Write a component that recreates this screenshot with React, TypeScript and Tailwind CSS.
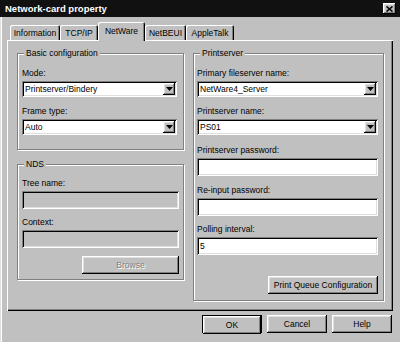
import { ReactNode } from 'react'

const raised =
  'shadow-[inset_-1px_-1px_0_#000,inset_1px_1px_0_#fff,inset_-2px_-2px_0_#808080,inset_2px_2px_0_#dfdfdf]'
const sunken =
  'shadow-[inset_1px_1px_0_#808080,inset_-1px_-1px_0_#fff,inset_2px_2px_0_#000,inset_-2px_-2px_0_#dfdfdf]'

const tabs = [
  { name: 'Information', w: 'w-[50px]' },
  { name: 'TCP/IP', w: 'w-[38px]' },
  { name: 'NetWare', w: 'w-[47px]', active: true },
  { name: 'NetBEUI', w: 'w-[41px]' },
  { name: 'AppleTalk', w: 'w-[48px]' },
]

function Label({ children }: { children: ReactNode }) {
  return <div className="leading-[10px] h-[10px] mb-[3px]">{children}</div>
}

function Select({ value }: { value: string }) {
  return (
    <div className={`h-[16px] flex items-center pl-[3px] pr-[2px] bg-white ${sunken}`}>
      <span className="flex-1 leading-[10px]">{value}</span>
      <span className={`w-[12px] h-[12px] flex items-center justify-center bg-[#c0c0c0] ${raised}`}>
        <svg width="7" height="4" viewBox="0 0 7 4">
          <path d="M0 0h7L3.5 4z" fill="#000" />
        </svg>
      </span>
    </div>
  )
}

function Input({ value, disabled }: { value?: string; disabled?: boolean }) {
  return (
    <div
      className={`h-[18px] flex items-center pl-[3px] leading-[10px] ${
        disabled ? 'bg-[#c0c0c0]' : 'bg-white'
      } ${sunken}`}
    >
      {value}
    </div>
  )
}

function Button({
  children,
  className = '',
  disabled,
}: {
  children: ReactNode
  className?: string
  disabled?: boolean
}) {
  return (
    <div
      className={`h-[18px] flex items-center justify-center bg-[#c0c0c0] leading-[10px] ${raised} ${className} ${
        disabled ? 'text-[#808080] [text-shadow:1px_1px_0_#fff]' : ''
      }`}
    >
      {children}
    </div>
  )
}

function Group({
  title,
  className,
  children,
}: {
  title: string
  className: string
  children: ReactNode
}) {
  return (
    <div
      className={`relative border border-[#808080] shadow-[inset_1px_1px_0_#fff,1px_1px_0_#fff] ${className}`}
    >
      <span className="absolute -top-[6px] left-[6px] px-[2px] bg-[#c0c0c0] leading-[10px]">
        {title}
      </span>
      {children}
    </div>
  )
}

export default function App() {
  return (
    <div className="w-[400px] h-[342px] overflow-hidden bg-[#c0c0c0] flex flex-col text-black text-[8.5px] font-['Liberation_Sans',Arial,sans-serif] shadow-[inset_1px_0_0_#dfdfdf,inset_2px_0_0_#fff]">
      {/* title bar */}
      <div className="h-[17px] bg-[#111] flex items-center justify-between pl-[5px] pr-[4px] shrink-0">
        <span className="text-white font-bold text-[9.5px] leading-[12px]">Network-card property</span>
        <span className={`w-[13px] h-[11px] flex items-center justify-center bg-[#c0c0c0] ${raised}`}>
          <svg width="7" height="6" viewBox="0 0 7 6">
            <path d="M0.5 0.5L6.5 5.5M6.5 0.5L0.5 5.5" stroke="#000" strokeWidth="1.6" />
          </svg>
        </span>
      </div>

      {/* tabs */}
      <div className="mt-[5px] h-[18px] pl-[10px] flex items-end shrink-0">
        {tabs.map((t) => (
          <div
            key={t.name}
            className={`${t.w} flex items-center justify-center bg-[#c0c0c0] rounded-t-[2px] leading-[10px] shadow-[inset_1px_1px_0_#fff,inset_-1px_0_0_#000,inset_-2px_0_0_#808080] ${
              t.active ? 'h-[19px] -mb-[1px] relative z-10 pb-[2px]' : 'h-[15px] pt-[1px]'
            }`}
          >
            {t.name}
          </div>
        ))}
      </div>

      {/* panel */}
      <div className="ml-[7px] w-[386px] h-[271px] shrink-0 flex items-start gap-[9px] pl-[10px] pt-[13px] shadow-[inset_1px_1px_0_#fff,inset_-1px_-1px_0_#000,inset_-2px_-2px_0_#808080]">
        <div className="flex flex-col w-[167px]">
          <Group title="Basic configuration" className="pt-[14px] pl-[4px] pr-[6px] pb-[14px]">
            <Label>Mode:</Label>
            <Select value="Printserver/Bindery" />
            <div className="mt-[9px]" />
            <Label>Frame type:</Label>
            <Select value="Auto" />
          </Group>
          <Group title="NDS" className="mt-[14px] pt-[13px] pl-[4px] pr-[4px] pb-[5px]">
            <Label>Tree name:</Label>
            <Input disabled />
            <div className="mt-[8px]" />
            <Label>Context:</Label>
            <Input disabled />
            <div className="mt-[8px] flex justify-end">
              <Button className="w-[97px]" disabled>
                Browse
              </Button>
            </div>
          </Group>
        </div>

        <Group title="Printserver" className="w-[191px] pt-[14px] pl-[3px] pr-[5px] pb-[6px]">
          <Label>Primary fileserver name:</Label>
          <Select value="NetWare4_Server" />
          <div className="mt-[9px]" />
          <Label>Printserver name:</Label>
          <Select value="PS01" />
          <div className="mt-[10px]" />
          <Label>Printserver password:</Label>
          <Input />
          <div className="mt-[9px]" />
          <Label>Re-input password:</Label>
          <Input />
          <div className="mt-[8px]" />
          <Label>Polling interval:</Label>
          <Input value="5" />
          <div className="mt-[21px] flex justify-end">
            <Button className="w-[110px]">Print Queue Configuration</Button>
          </div>
        </Group>
      </div>

      {/* bottom buttons */}
      <div className="mt-[4px] flex justify-end gap-[5px] pr-[8px]">
        <div className="w-[60px] h-[18px] border border-black">
          <Button className="h-[16px]">OK</Button>
        </div>
        <Button className="w-[60px]">Cancel</Button>
        <Button className="w-[60px]">Help</Button>
      </div>
    </div>
  )
}
